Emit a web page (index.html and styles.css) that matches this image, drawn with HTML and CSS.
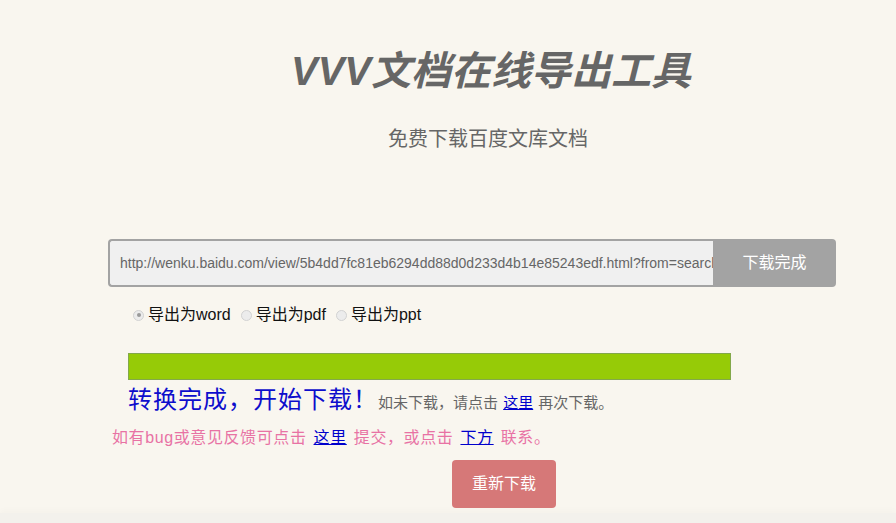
FILE: index.html
```html
<!DOCTYPE html>
<html lang="zh-CN">
<head>
<meta charset="utf-8">
<title>VVV文档在线导出工具</title>
<link rel="stylesheet" href="styles.css">
</head>
<body>
<div class="page">
  <div class="wrap">
    <h1 class="title">VVV文档在线导出工具</h1>
    <p class="subtitle">免费下载百度文库文档</p>
    <div class="input-group">
      <div class="url-input">http://wenku.baidu.com/view/5b4dd7fc81eb6294dd88d0d233d4b14e85243edf.html?from=search</div>
      <div class="btn-done">下载完成</div>
    </div>
    <div class="radios">
      <label class="radio"><span class="dot checked"></span>导出为word</label>
      <label class="radio"><span class="dot"></span>导出为pdf</label>
      <label class="radio"><span class="dot"></span>导出为ppt</label>
    </div>
    <div class="progress"></div>
    <div class="done-line"><span class="done">转换完成，开始下载！</span><span class="hint">如未下载，请点击 <a href="#">这里</a> 再次下载。</span></div>
  </div>
  <div class="feedback">如有bug或意见反馈可点击 <a href="#">这里</a> 提交，或点击 <a href="#">下方</a> 联系。</div>
  <div class="redo-row"><span class="btn-redo">重新下载</span></div>
</div>
<div class="footer"></div>
</body>
</html>
```
FILE: styles.css
```css
html, body {
  margin: 0;
  padding: 0;
  background: #f9f6ef;
  font-family: "Liberation Sans", "Noto Sans CJK SC", sans-serif;
  overflow: hidden;
}
.page {
  height: 513px;
}
.wrap {
  width: 728px;
  margin-left: 108px;
  padding-top: 47px;
}
.title {
  margin: 0;
  padding-left: 38px;
  text-align: center;
  font-size: 40px;
  line-height: 48px;
  font-weight: bold;
  font-style: italic;
  color: #666;
}
.subtitle {
  margin: 31px 0 0;
  padding-left: 32px;
  text-align: center;
  font-size: 20px;
  line-height: 26px;
  color: #666;
}
.input-group {
  display: flex;
  margin-top: 87px;
  height: 48px;
}
.url-input {
  flex: 1;
  min-width: 0;
  box-sizing: border-box;
  border: 2px solid #a3a3a3;
  border-right: none;
  border-radius: 4px 0 0 4px;
  background: #f0f0f0;
  color: #666;
  font-size: 14px;
  line-height: 44px;
  padding-left: 10px;
  white-space: nowrap;
  overflow: hidden;
}
.btn-done {
  width: 123px;
  background: #a3a3a3;
  color: #fff;
  border-radius: 0 4px 4px 0;
  font-size: 16px;
  line-height: 48px;
  text-align: center;
}
.radios {
  display: flex;
  gap: 10px;
  margin-top: 17px;
  padding-left: 25px;
  font-size: 16px;
  line-height: 22px;
  color: #111;
}
.radio {
  display: flex;
  align-items: center;
}
.dot {
  width: 11px;
  height: 11px;
  border: 1px solid #d2d2d2;
  border-radius: 50%;
  background: #ececec;
  margin-right: 4px;
  box-sizing: border-box;
  position: relative;
}
.dot.checked::after {
  content: "";
  position: absolute;
  left: 2.5px;
  top: 2.5px;
  width: 4px;
  height: 4px;
  border-radius: 50%;
  background: #9a9a9a;
}
.progress {
  margin: 27px 0 0 20px;
  width: 603px;
  height: 27px;
  box-sizing: border-box;
  background: #96cb07;
  border: 1px solid #83a84a;
}
.done-line {
  padding-left: 20px;
  margin-top: 3px;
  line-height: 34px;
}
.done {
  color: #0d0dcc;
  font-size: 24px;
  letter-spacing: 1px;
}
.hint {
  color: #666;
  font-size: 15px;
  word-spacing: 1px;
}
a {
  color: #0000cc;
  text-decoration: underline;
}
.feedback {
  margin-left: 112px;
  margin-top: 7px;
  font-size: 16px;
  line-height: 22px;
  color: #e872a4;
  word-spacing: 2px;
  letter-spacing: 0.6px;
}
.redo-row {
  padding-left: 452px;
  margin-top: 11px;
}
.btn-redo {
  display: inline-block;
  width: 104px;
  height: 48px;
  line-height: 48px;
  text-align: center;
  background: #d67878;
  color: #fff;
  font-size: 16px;
  border-radius: 4px;
}
.footer {
  height: 20px;
  background: #f3f1ec;
  box-shadow: 0 -3px 6px rgba(0,0,0,0.02);
}
```
